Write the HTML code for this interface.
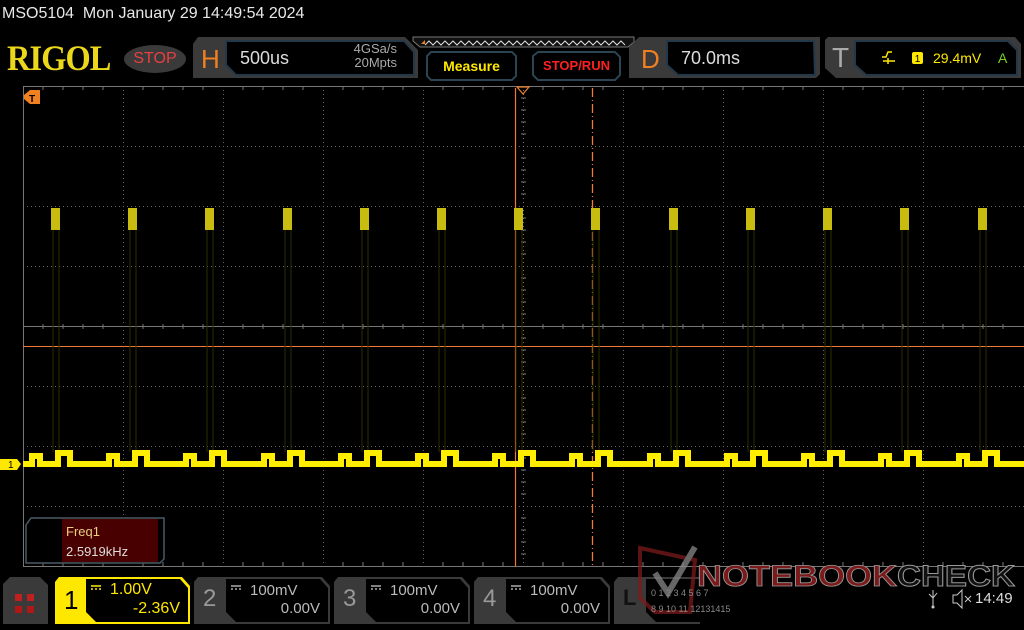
<!DOCTYPE html>
<html><head><meta charset="utf-8"><style>
body{margin:0;width:1024px;height:630px;background:#000;overflow:hidden;position:relative;font-family:"Liberation Sans","DejaVu Sans",sans-serif;}
.a{position:absolute}
</style></head><body>
<div class="a" style="left:2px;top:5px;color:#e8e8e8;font-size:16px;white-space:pre">MSO5104  Mon January 29 14:49:54 2024</div>
<div class="a" style="left:7px;top:37px;color:#ecd81a;font-family:'Liberation Serif',serif;font-weight:bold;font-size:36px;letter-spacing:-1px;transform:scaleX(0.9);transform-origin:left">RIGOL</div>
<div class="a" style="left:124px;top:45px;width:62px;height:28px;border-radius:50%;background:#3a3a3a;color:#e84040;font-size:16px;text-align:center;line-height:28px">STOP</div>
<svg class="a" style="left:0;top:0" width="1024" height="630">
 <path d="M193 44 L198 37 L405 37 L418 50 L418 78 L193 78Z" fill="#3a3a3a"/>
 <path d="M226 41 L404 41 L414 52 L414 75 L236 75 L226 65Z" fill="#000" stroke="#23394a" stroke-width="2"/>
 <path d="M413 37 L634 37 L634 42 L628 47 L420 47 L413 41Z" fill="#111" stroke="#777" stroke-width="1"/>
 <polyline points="425,45 429,41 433,45 437,41 441,45 445,41 449,45 453,41 457,45 461,41 465,45 469,41 473,45 477,41 481,45 485,41 489,45 493,41 497,45 501,41 505,45 509,41 513,45 517,41 521,45 525,41 529,45 533,41 537,45 541,41 545,45 549,41 553,45 557,41 561,45 565,41 569,45 573,41 577,45 581,41 585,45 589,41 593,45 597,41 601,45 605,41 609,45 613,41 617,45 621,41 625,45" fill="none" stroke="#ddd" stroke-width="1"/>
 <path d="M421 44 L425 40 L425 44Z" fill="#f08020"/>
 <path d="M427 56 L431 52 L512 52 L516 56 L516 76 L512 80 L431 80 L427 76Z" fill="#000" stroke="#2a4452" stroke-width="2"/>
 <path d="M533 56 L538 52 L615 52 L620 57 L620 75 L615 80 L538 80 L533 75Z" fill="#000" stroke="#2a4452" stroke-width="2"/>
 <path d="M629 47 L639 37 L820 37 L820 74 L816 78 L629 78Z" fill="#3a3a3a"/>
 <path d="M667 41 L814 41 L815 75 L678 75 L667 65Z" fill="#000" stroke="#23394a" stroke-width="2"/>
 <path d="M825 40 L828 37 L1015 37 L1021 44 L1021 78 L836 78 L825 68Z" fill="#3a3a3a"/>
 <path d="M855 41 L1008 41 L1017 50 L1017 75 L866 75 L855 65Z" fill="#000" stroke="#23394a" stroke-width="2"/>
 <path d="M882 57 L886 57 L888 52 L892 52 M883 61 L895 61 M888 64 L888 58" stroke="#ffe800" stroke-width="1.5" fill="none"/>
 <rect x="912" y="52" width="11" height="12" rx="2" fill="#ffe800"/>
 <text x="917.5" y="62" fill="#000" font-size="10" text-anchor="middle">1</text>
 <g stroke="#666" stroke-width="1" stroke-dasharray="1,3">
  <line x1="123.5" y1="86" x2="123.5" y2="566"/><line x1="223.5" y1="86" x2="223.5" y2="566"/><line x1="323.5" y1="86" x2="323.5" y2="566"/><line x1="423.5" y1="86" x2="423.5" y2="566"/><line x1="623.5" y1="86" x2="623.5" y2="566"/><line x1="723.5" y1="86" x2="723.5" y2="566"/><line x1="823.5" y1="86" x2="823.5" y2="566"/><line x1="923.5" y1="86" x2="923.5" y2="566"/>
  <line x1="23" y1="146.5" x2="1024" y2="146.5"/><line x1="23" y1="206.5" x2="1024" y2="206.5"/><line x1="23" y1="266.5" x2="1024" y2="266.5"/><line x1="23" y1="386.5" x2="1024" y2="386.5"/><line x1="23" y1="446.5" x2="1024" y2="446.5"/><line x1="23" y1="506.5" x2="1024" y2="506.5"/>
 </g>
 <g stroke="#777" stroke-width="1">
  <line x1="23.5" y1="86" x2="23.5" y2="566"/><line x1="23" y1="86.5" x2="1024" y2="86.5"/><line x1="23" y1="566.5" x2="1024" y2="566.5"/>
  <line x1="23" y1="326.5" x2="1024" y2="326.5"/><line x1="523.5" y1="86" x2="523.5" y2="566" stroke-dasharray="1,3"/>
 </g>
 <g stroke="#777" stroke-width="1">
  <path d="M43 86v4M63 86v4M83 86v4M103 86v4M143 86v4M163 86v4M183 86v4M203 86v4M243 86v4M263 86v4M283 86v4M303 86v4M343 86v4M363 86v4M383 86v4M403 86v4M443 86v4M463 86v4M483 86v4M503 86v4M543 86v4M563 86v4M583 86v4M603 86v4M643 86v4M663 86v4M683 86v4M703 86v4M743 86v4M763 86v4M783 86v4M803 86v4M843 86v4M863 86v4M883 86v4M903 86v4M943 86v4M963 86v4M983 86v4M1003 86v4"/>
  <path d="M43 566v-4M63 566v-4M83 566v-4M103 566v-4M143 566v-4M163 566v-4M183 566v-4M203 566v-4M243 566v-4M263 566v-4M283 566v-4M303 566v-4M343 566v-4M363 566v-4M383 566v-4M403 566v-4M443 566v-4M463 566v-4M483 566v-4M503 566v-4M543 566v-4M563 566v-4M583 566v-4M603 566v-4M643 566v-4M663 566v-4M683 566v-4M703 566v-4M743 566v-4M763 566v-4M783 566v-4M803 566v-4M843 566v-4M863 566v-4M883 566v-4M903 566v-4M943 566v-4M963 566v-4M983 566v-4M1003 566v-4"/>
  <path d="M43 324v5M63 324v5M83 324v5M103 324v5M143 324v5M163 324v5M183 324v5M203 324v5M243 324v5M263 324v5M283 324v5M303 324v5M343 324v5M363 324v5M383 324v5M403 324v5M443 324v5M463 324v5M483 324v5M503 324v5M543 324v5M563 324v5M583 324v5M603 324v5M643 324v5M663 324v5M683 324v5M703 324v5M743 324v5M763 324v5M783 324v5M803 324v5M843 324v5M863 324v5M883 324v5M903 324v5M943 324v5M963 324v5M983 324v5M1003 324v5"/>
  <path d="M521 98h5M521 110h5M521 122h5M521 134h5M521 158h5M521 170h5M521 182h5M521 194h5M521 218h5M521 230h5M521 242h5M521 254h5M521 278h5M521 290h5M521 302h5M521 314h5M521 338h5M521 350h5M521 362h5M521 374h5M521 398h5M521 410h5M521 422h5M521 434h5M521 458h5M521 470h5M521 482h5M521 494h5M521 518h5M521 530h5M521 542h5M521 554h5"/>
 </g>
 <line x1="23" y1="346.5" x2="1024" y2="346.5" stroke="#f07838" stroke-width="1"/>
 <line x1="515.5" y1="88" x2="515.5" y2="566" stroke="#f07838" stroke-width="1.2"/>
 <line x1="592.5" y1="88" x2="592.5" y2="566" stroke="#f07838" stroke-width="1.3" stroke-dasharray="9,3,1,3"/>
 <path d="M517 87 L529 87 L523 94Z" fill="none" stroke="#f08030" stroke-width="1.2"/>
 <path d="M24 95 L30 90 L40 90 L40 104 L30 104 L24 99Z" fill="#f08020"/>
 <text x="29" y="102" font-size="10" fill="#000" font-weight="bold">T</text>
 <path d="M0 459 L17 459 L21 464 L17 470 L0 470Z" fill="#ffe800"/>
 <text x="8" y="468" font-size="10" fill="#000">1</text>
 <g stroke="#2e2e00" stroke-width="1">
  <path d="M53 226V452M59 226V452M130 226V452M136 226V452M207 226V452M213 226V452M285 226V452M291 226V452M362 226V452M368 226V452M439 226V452M445 226V452M516 226V452M522 226V452M593 226V452M599 226V452M671 226V452M677 226V452M748 226V452M754 226V452M825 226V452M831 226V452M902 226V452M908 226V452M980 226V452M986 226V452"/>
 </g>
 <g fill="#c8bc10">
  <rect x="51" y="208" width="9" height="22"/><rect x="128" y="208" width="9" height="22"/><rect x="205" y="208" width="9" height="22"/><rect x="283" y="208" width="9" height="22"/><rect x="360" y="208" width="9" height="22"/><rect x="437" y="208" width="9" height="22"/><rect x="514" y="208" width="9" height="22"/><rect x="591" y="208" width="9" height="22"/><rect x="669" y="208" width="9" height="22"/><rect x="746" y="208" width="9" height="22"/><rect x="823" y="208" width="9" height="22"/><rect x="900" y="208" width="9" height="22"/><rect x="978" y="208" width="9" height="22"/>
 </g>
 <polyline fill="none" stroke="#ffee00" stroke-width="6" points="23,464 32,464 32,456 40,456 40,464 58,464 58,453 70,453 70,464 109,464 109,456 117,456 117,464 135,464 135,453 147,453 147,464 186,464 186,456 194,456 194,464 212,464 212,453 224,453 224,464 264,464 264,456 272,456 272,464 290,464 290,453 302,453 302,464 341,464 341,456 349,456 349,464 367,464 367,453 379,453 379,464 418,464 418,456 426,456 426,464 444,464 444,453 456,453 456,464 495,464 495,456 503,456 503,464 521,464 521,453 533,453 533,464 572,464 572,456 580,456 580,464 598,464 598,453 610,453 610,464 650,464 650,456 658,456 658,464 676,464 676,453 688,453 688,464 727,464 727,456 735,456 735,464 753,464 753,453 765,453 765,464 804,464 804,456 812,456 812,464 830,464 830,453 842,453 842,464 881,464 881,456 889,456 889,464 907,464 907,453 919,453 919,464 959,464 959,456 967,456 967,464 985,464 985,453 997,453 997,464 1024,464"/>
 <path d="M26 525 L31 518 L164 518 L164 559 L160 563 L26 563Z" fill="#000" stroke="#4a5a66" stroke-width="1.5"/>
 <rect x="62" y="519" width="96" height="43" fill="#480000"/>
 <path d="M3 584 L10 577 L40 577 L48 585 L48 624 L3 624Z" fill="#3a3a3a"/>
 <rect x="15" y="594" width="7" height="7" fill="#c02020"/><rect x="27" y="594" width="7" height="7" fill="#c02020"/><rect x="15" y="606" width="7" height="7" fill="#b01818"/><rect x="27" y="606" width="7" height="7" fill="#b01818"/>
 <path d="M55 582 L59 577 L182 577 L190 586 L190 624 L55 624Z" fill="#ffe800"/>
 <path d="M86 579 L180 579 L188 588 L188 622 L96 622 L86 612Z" fill="#000"/>
 <g fill="#3a3a3a">
  <path d="M194 582 L198 577 L322 577 L330 586 L330 624 L194 624Z"/>
  <path d="M334 582 L338 577 L462 577 L470 586 L470 624 L334 624Z"/>
  <path d="M474 582 L478 577 L602 577 L610 586 L610 624 L474 624Z"/>
  <path d="M614 582 L618 577 L700 577 L700 624 L614 624Z"/>
 </g>
 <g fill="#000">
  <path d="M226 579 L320 579 L328 588 L328 622 L236 622 L226 612Z"/>
  <path d="M366 579 L460 579 L468 588 L468 622 L376 622 L366 612Z"/>
  <path d="M506 579 L600 579 L608 588 L608 622 L516 622 L506 612Z"/>
  <path d="M646 579 L745 579 L745 622 L656 622 L646 612Z"/>
 </g>
 <g stroke-width="1.5"><path d="M91 586h10M91 589h2M95 589h2M99 589h2" stroke="#ffe800"/>
 <path d="M231 586h10M231 589h2M235 589h2M239 589h2M371 586h10M371 589h2M375 589h2M379 589h2M511 586h10M511 589h2M515 589h2M519 589h2" stroke="#aaa"/></g>
 <g opacity="0.75">
  <path d="M640 548 L695 560 L690 612 L655 612 L640 598Z" fill="none" stroke="#7a1a1a" stroke-width="4"/>
  <path d="M655 573 L668 593 L695 547" fill="none" stroke="#888" stroke-width="6"/>
 </g>
 <text x="697" y="586" font-size="30" font-weight="bold" fill="#7a1a1a" stroke="#999" stroke-width="0.8" textLength="200" lengthAdjust="spacingAndGlyphs">NOTEBOOK</text>
 <text x="897" y="586" font-size="30" font-weight="bold" fill="#111" stroke="#999" stroke-width="1" textLength="118" lengthAdjust="spacingAndGlyphs">CHECK</text>
 <text x="651" y="596" font-size="9" fill="#888">0 1 2 3  4 5 6 7</text>
 <text x="651" y="612" font-size="9" fill="#888">8 9 10 11 12131415</text>
 <path d="M933 590 V606 M929 594 L933 598 L937 593" stroke="#ccc" stroke-width="1" fill="none"/>
 <circle cx="933" cy="607" r="1.5" fill="#ccc"/>
 <path d="M953 595 L957 595 L962 590 L962 608 L957 603 L953 603Z M965 596 L971 602 M971 596 L965 602" stroke="#ccc" stroke-width="1" fill="none"/>
</svg>
<div class="a" style="left:201px;top:44px;color:#f08020;font-size:26px">H</div>
<div class="a" style="left:240px;top:48px;color:#ddd;font-size:18px">500us</div>
<div class="a" style="left:343px;top:42px;color:#aaa;font-size:13px;line-height:14px;text-align:right;width:54px">4GSa/s<br>20Mpts</div>
<div class="a" style="left:427px;top:58px;width:89px;text-align:center;color:#ffe800;font-size:14px;font-weight:bold">Measure</div>
<div class="a" style="left:533px;top:58px;width:87px;text-align:center;color:#ff2020;font-size:13px;font-weight:bold">STOP/RUN</div>
<div class="a" style="left:641px;top:44px;color:#f08020;font-size:26px">D</div>
<div class="a" style="left:681px;top:48px;color:#ddd;font-size:18px">70.0ms</div>
<div class="a" style="left:832px;top:42px;color:#aaa;font-size:28px">T</div>
<div class="a" style="left:933px;top:50px;color:#ffe800;font-size:14px">29.4mV</div>
<div class="a" style="left:998px;top:50px;color:#7cd020;font-size:14px">A</div>
<div class="a" style="left:66px;top:524px;color:#e8d080;font-size:13px">Freq1</div>
<div class="a" style="left:66px;top:544px;color:#ddd;font-size:13px">2.5919kHz</div>
<div class="a" style="left:64px;top:585px;color:#000;font-size:26px">1</div>
<div class="a" style="left:110px;top:581px;color:#ffe800;font-size:16px">1.00V</div>
<div class="a" style="left:110px;top:600px;width:70px;text-align:right;color:#ffe800;font-size:16px">-2.36V</div>
<div class="a" style="left:203px;top:585px;color:#999;font-size:24px">2</div>
<div class="a" style="left:250px;top:582px;color:#bbb;font-size:15px">100mV</div>
<div class="a" style="left:250px;top:600px;width:70px;text-align:right;color:#bbb;font-size:15px">0.00V</div>
<div class="a" style="left:343px;top:585px;color:#999;font-size:24px">3</div>
<div class="a" style="left:390px;top:582px;color:#bbb;font-size:15px">100mV</div>
<div class="a" style="left:390px;top:600px;width:70px;text-align:right;color:#bbb;font-size:15px">0.00V</div>
<div class="a" style="left:483px;top:585px;color:#999;font-size:24px">4</div>
<div class="a" style="left:530px;top:582px;color:#bbb;font-size:15px">100mV</div>
<div class="a" style="left:530px;top:600px;width:70px;text-align:right;color:#bbb;font-size:15px">0.00V</div>
<div class="a" style="left:623px;top:585px;color:#111;font-size:22px;font-weight:bold">L</div>
<div class="a" style="left:975px;top:590px;color:#ddd;font-size:15px">14:49</div>
</body></html>
